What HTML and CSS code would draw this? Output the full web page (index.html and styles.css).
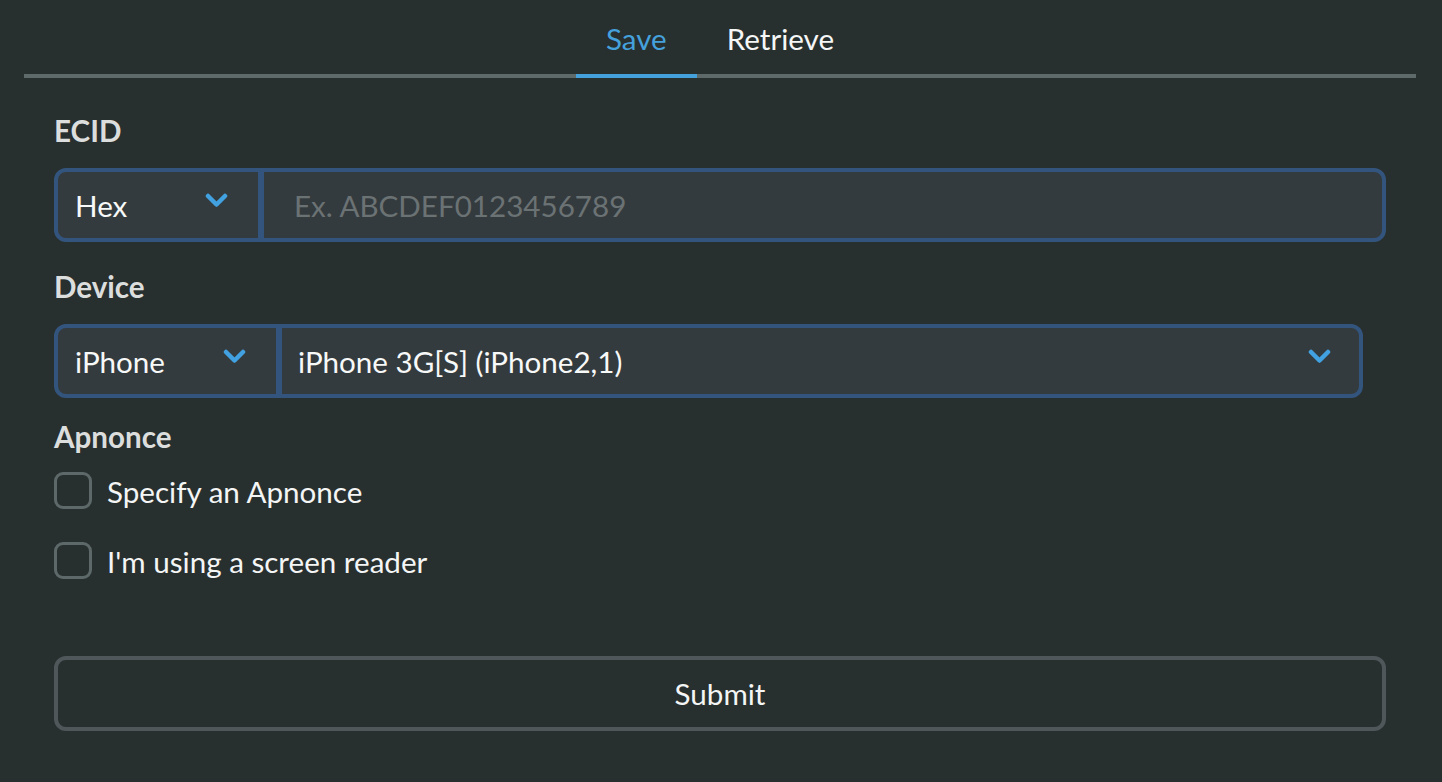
FILE: index.html
```html
<!DOCTYPE html>
<html lang="en">
<head>
<meta charset="utf-8">
<title>Save blobs</title>
<link rel="stylesheet" href="styles.css">
</head>
<body>
<nav class="tabs">
  <a class="tab tab-active">Save</a>
  <a class="tab">Retrieve</a>
</nav>
<form class="form">
  <div class="label">ECID</div>
  <div class="group">
    <div class="select select-hex">
      <span class="select-text">Hex</span>
      <svg class="chev" viewBox="0 0 23 15" width="23" height="15"><polyline points="3,3 11.5,11.5 20,3" fill="none" stroke="#42a1e0" stroke-width="4.5" stroke-linecap="round" stroke-linejoin="round"/></svg>
    </div>
    <div class="input"><span class="placeholder">Ex. ABCDEF0123456789</span></div>
  </div>

  <div class="label label-device">Device</div>
  <div class="group group-device">
    <div class="select select-type">
      <span class="select-text">iPhone</span>
      <svg class="chev" viewBox="0 0 23 15" width="23" height="15"><polyline points="3,3 11.5,11.5 20,3" fill="none" stroke="#42a1e0" stroke-width="4.5" stroke-linecap="round" stroke-linejoin="round"/></svg>
    </div>
    <div class="select select-model">
      <span class="select-text">iPhone 3G[S] (iPhone2,1)</span>
      <svg class="chev" viewBox="0 0 23 15" width="23" height="15"><polyline points="3,3 11.5,11.5 20,3" fill="none" stroke="#42a1e0" stroke-width="4.5" stroke-linecap="round" stroke-linejoin="round"/></svg>
    </div>
  </div>

  <div class="label label-apnonce">Apnonce</div>
  <label class="check check-first"><span class="box"></span><span class="check-text">Specify an Apnonce</span></label>
  <label class="check check-second"><span class="box"></span><span class="check-text">I'm using a screen reader</span></label>

  <div class="submit">Submit</div>
</form>
</body>
</html>
```

FILE: styles.css
```css
html, body {
  margin: 0;
  padding: 0;
  background: #282f2f;
  font-family: Lato, "Noto Sans", sans-serif;
  color: #f4f5f5;
  height: 100%;
}

.tabs {
  margin: 0 26px 0 24px;
  display: flex;
  justify-content: center;
  border-bottom: 4px solid #5e6969;
}

.tab {
  display: block;
  height: 74px;
  line-height: 78px;
  padding: 0 30px;
  font-size: 29.6px;
  color: #f5f6f6;
  margin-bottom: -4px;
  border-bottom: 4px solid transparent;
  box-sizing: content-box;
}

.tab-active {
  color: #45a1dc;
  border-bottom-color: #45a1dc;
}

.form {
  padding: 0 56px 0 54px;
  display: flex;
  flex-direction: column;
}

.label {
  font-size: 29.6px;
  font-weight: bold;
  color: #dcdedd;
  line-height: 42px;
  margin-top: 32px;
}

.label-device { margin-top: 24px; }
.label-apnonce { margin-top: 18px; }

.group {
  margin-top: 16px;
  height: 66px;
  border: 4px solid #33557d;
  border-radius: 12px;
  display: flex;
  overflow: hidden;
  background: #343b3e;
}

.group-device {
  margin-top: 16px;
  margin-right: 23px;
}

.select {
  display: flex;
  align-items: center;
  justify-content: space-between;
  font-size: 29.6px;
  color: #f7f8f8;
}

.select-hex {
  width: 200px;
  padding: 0 30px 0 17px;
  box-sizing: border-box;
}

.select-type {
  width: 218px;
  padding: 0 30px 0 17px;
  box-sizing: border-box;
}

.select-model {
  flex: 1;
  border-left: 6px solid #33557d;
  padding: 0 28px 0 16px;
}

.input {
  flex: 1;
  border-left: 6px solid #33557d;
  display: flex;
  align-items: center;
  padding-left: 30px;
  font-size: 29.6px;
}

.placeholder { color: #6b7274; }

.chev { display: block; margin-top: -10px; }

.check {
  display: flex;
  align-items: center;
  height: 37px;
  font-size: 29.6px;
  color: #f4f5f5;
}

.check-first { margin-top: 14px; }
.check-second { margin-top: 33px; }

.box {
  width: 38px;
  height: 37px;
  box-sizing: border-box;
  border: 3px solid #5d6868;
  border-radius: 9px;
  margin-right: 15px;
}

.check-text { line-height: 37px; padding-top: 2px; }

.submit {
  margin-top: 77px;
  height: 75px;
  box-sizing: border-box;
  border: 4px solid #4f575a;
  border-radius: 12px;
  display: flex;
  align-items: center;
  justify-content: center;
  font-size: 29.6px;
  color: #f4f5f5;
}
```
